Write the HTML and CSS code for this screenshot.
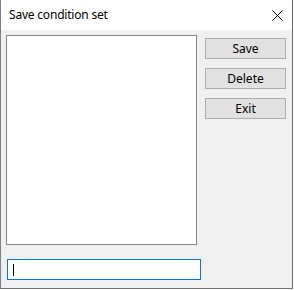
FILE: index.html
```html
<!DOCTYPE html>
<html>
<head>
<meta charset="utf-8">
<link rel="stylesheet" href="styles.css">
</head>
<body>
<div class="window">
  <div class="titlebar">
    <span class="title">Save condition set</span>
    <svg class="close" width="11" height="11" viewBox="0 0 11 11">
      <path d="M0.5 0.5 L10.5 10.5 M10.5 0.5 L0.5 10.5" stroke="#000" stroke-width="1" fill="none"/>
    </svg>
  </div>
  <div class="content">
    <div class="main">
      <div class="listbox"></div>
      <div class="buttons">
        <div class="btn">Save</div>
        <div class="btn">Delete</div>
        <div class="btn">Exit</div>
      </div>
    </div>
    <div class="input"><span class="caret"></span></div>
  </div>
</div>
</body>
</html>
```

FILE: styles.css
```css
html, body {
  margin: 0;
  padding: 0;
  background: #ffffff;
}
body {
  width: 294px;
  height: 290px;
  overflow: hidden;
  font-family: "Noto Sans", "Open Sans", sans-serif;
  font-size: 12px;
  color: #000;
}
.window {
  width: 291px;
  height: 288px;
  border-left: 1px solid #808080;
  border-right: 1px solid #6f6f6f;
  border-bottom: 1px solid #6f6f6f;
  display: flex;
  flex-direction: column;
  background: #f0f0f0;
}
.titlebar {
  height: 30px;
  background: #ffffff;
  display: flex;
  align-items: center;
  justify-content: space-between;
  padding: 0 9px 0 8px;
  flex: none;
}
.title {
  font-size: 12px;
  line-height: 16px;
  letter-spacing: -0.2px;
}
.content {
  flex: 1;
  padding: 5px 0 0 5px;
  display: flex;
  flex-direction: column;
}
.main {
  display: flex;
  align-items: flex-start;
}
.listbox {
  width: 189px;
  height: 208px;
  background: #ffffff;
  border: 1px solid #828790;
}
.buttons {
  margin-left: 8px;
  margin-top: 3px;
  display: flex;
  flex-direction: column;
  gap: 9px;
}
.btn {
  width: 79px;
  height: 19px;
  background: #e1e1e1;
  border: 1px solid #adadad;
  display: flex;
  align-items: center;
  justify-content: center;
  font-size: 12px;
}
.input {
  margin-top: 14px;
  margin-left: 1px;
  width: 187px;
  height: 19px;
  background: #ffffff;
  border: 1px solid #0078d7;
  display: flex;
  align-items: center;
  padding-left: 5px;
}
.caret {
  width: 1px;
  height: 12px;
  background: #000;
}
```
